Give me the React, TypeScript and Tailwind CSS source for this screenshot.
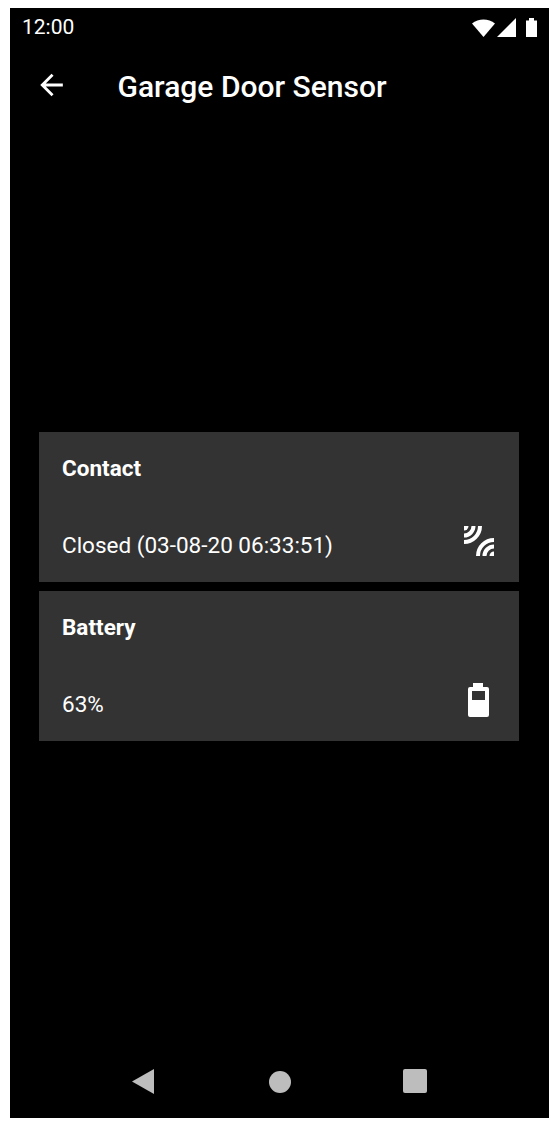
export default function App() {
  return (
    <div className="w-[559px] h-[1127px] bg-white pt-2 pl-[10px] font-['Roboto',sans-serif]">
      <div className="w-[539px] h-[1110px] bg-black flex flex-col text-white">
        {/* status bar */}
        <div className="h-[38px] flex items-center pl-3">
          <span className="text-[21px] leading-none">12:00</span>
          <div className="ml-auto mr-3 flex items-center">
            <svg width="23" height="18" viewBox="0 0 23 18" className="block mt-[1px]">
              <path d="M0 4.5C6.5 -1 16.5 -1 23 4.5L11.5 18Z" fill="white" />
            </svg>
            <svg width="19" height="19" viewBox="0 0 19 19" className="block ml-[2px]">
              <path d="M19 0V19H0Z" fill="white" />
            </svg>
            <svg width="11" height="19" viewBox="0 0 11 19" className="block ml-[10px]">
              <path d="M0 2.5H3V0H8V2.5H11V19H0Z" fill="white" />
            </svg>
          </div>
        </div>
        {/* app bar */}
        <div className="h-[81px] flex items-center pl-[29px]">
          <svg width="26" height="26" viewBox="0 0 24 24" className="block mb-[4px]">
            <path d="M22 12H3M12.5 2.5L3 12l9.5 9.5" fill="none" stroke="white" strokeWidth="2.6" />
          </svg>
          <h1 className="ml-[52.5px] text-[30px] font-medium leading-none">Garage Door Sensor</h1>
        </div>
        {/* cards */}
        <main className="flex-1 flex flex-col justify-center gap-[9px] pl-[29px] pr-[30px]">
          <Card title="Contact" value="Closed (03-08-20 06:33:51)">
            <svg width="30" height="30" viewBox="0 0 30 30" className="block">
              <g fill="none" stroke="white" strokeWidth="4">
                <path d="M0 9.5A9.5 9.5 0 0 0 9.5 0" />
                <path d="M0 16A16 16 0 0 0 16 0" />
                <path d="M30 20.5A9.5 9.5 0 0 0 20.5 30" />
                <path d="M30 14A16 16 0 0 0 14 30" />
              </g>
              <path d="M0 0H4.5A4.5 4.5 0 0 1 0 4.5Z" fill="white" />
              <path d="M30 25.5V30H25.5A4.5 4.5 0 0 1 30 25.5Z" fill="white" />
            </svg>
          </Card>
          <Card title="Battery" value="63%">
            <svg width="21" height="34" viewBox="0 0 21 34" className="block mr-[5px]">
              <path
                fillRule="evenodd"
                d="M5 0H15V4H19A2 2 0 0 1 21 6V32A2 2 0 0 1 19 34H2A2 2 0 0 1 0 32V6A2 2 0 0 1 2 4H5ZM4 8V17H17V8Z"
                fill="white"
              />
            </svg>
          </Card>
        </main>
        {/* nav bar */}
        <div className="h-[72px] flex items-start pt-[23px] pl-[122px]">
          <svg width="22" height="25" viewBox="0 0 22 25" className="block">
            <path d="M22 0V25L0 12.5Z" fill="#bdbdbd" />
          </svg>
          <div className="ml-[115px] w-[22px] h-[22px] mt-[2px] rounded-full bg-[#bdbdbd]" />
          <div className="ml-[112px] w-[24px] h-[24px] rounded-[2px] bg-[#bdbdbd]" />
        </div>
      </div>
    </div>
  );
}

function Card({ title, value, children }: { title: string; value: string; children: React.ReactNode }) {
  return (
    <div className="h-[150px] bg-[#333333] flex flex-col pl-[23px] pr-[25px] pt-[23px]">
      <div className="text-[22.5px] font-bold leading-[26px]">{title}</div>
      <div className="mt-auto mb-[24px] flex items-center justify-between h-[34px]">
        <span className="text-[22.5px] leading-none pt-[8px]">{value}</span>
        {children}
      </div>
    </div>
  );
}
